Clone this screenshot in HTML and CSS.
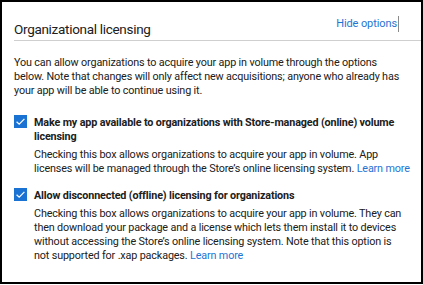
FILE: index.html
```html
<!DOCTYPE html>
<html>
<head>
    <title>Organizational licensing</title>
    <link rel="stylesheet" href="styles.css">
</head>
<body>
    <div id="panel">
        <div id="heading">
            <div id="title">Organizational licensing</div>
            <a class="link" id="toggle" href="#">Hide options</a>
        </div>
        <p id="intro">
            You can allow organizations to acquire your app in volume through the options<br>
            below. Note that changes will only affect new acquisitions; anyone who already has<br>
            your app will be able to continue using it.
        </p>
        <div class="option">
            <div class="check">
                <svg width="13" height="13" viewBox="0 0 13 13"><path d="M2.6 6.7 L5.2 9.2 L10.4 3.9" fill="none" stroke="white" stroke-width="1.2"/></svg>
            </div>
            <div class="option-text">
                <div class="option-label">Make my app available to organizations with Store-managed (online) volume<br>licensing</div>
                <div class="option-desc">
                    Checking this box allows organizations to acquire your app in volume. App<br>
                    licenses will be managed through the Store’s online licensing system. <a class="link" href="#">Learn more</a>
                </div>
            </div>
        </div>
        <div class="option">
            <div class="check">
                <svg width="13" height="13" viewBox="0 0 13 13"><path d="M2.6 6.7 L5.2 9.2 L10.4 3.9" fill="none" stroke="white" stroke-width="1.2"/></svg>
            </div>
            <div class="option-text">
                <div class="option-label">Allow disconnected (offline) licensing for organizations</div>
                <div class="option-desc">
                    Checking this box allows organizations to acquire your app in volume. They can<br>
                    then download your package and a license which lets them install it to devices<br>
                    without accessing the Store’s online licensing system. Note that this option is<br>
                    not supported for .xap packages. <a class="link" href="#">Learn more</a>
                </div>
            </div>
        </div>
    </div>
</body>
</html>
```

FILE: styles.css
```css
body{
    margin:0;
    background-color:white;
    font-family:Roboto, "Liberation Sans", sans-serif;
    color:#202020;
}

#panel{
    width:423px;
    height:284px;
    box-sizing:border-box;
    border:2px solid black;
    padding-left:12px;
    white-space:nowrap;
}

#heading{
    display:flex;
    justify-content:space-between;
    align-items:center;
    height:26px;
    padding-top:12px;
    padding-right:22px;
    border-bottom:1px solid #cfcfcf;
}

#title{
    font-size:13.5px;
    letter-spacing:-0.3px;
    line-height:16px;
    margin-top:4px;
}

#toggle{
    font-size:11px;
    letter-spacing:-0.1px;
    line-height:16px;
    margin-top:-6px;
    padding-right:1px;
    border-right:1px solid #8a8a8a;
}

.link{
    color:#1f74d4;
    text-decoration:none;
}

#intro{
    margin:15px 0 0;
    font-size:10.8px;
    letter-spacing:-0.15px;
    line-height:14px;
}

.option{
    display:flex;
    margin-top:18px;
}

.option + .option{
    margin-top:13px;
}

.check{
    flex:none;
    width:13px;
    height:13px;
    background-color:#1a72d2;
    margin-top:-1px;
    margin-right:7px;
}

.check svg{
    display:block;
}

.option-label{
    font-size:10.8px;
    font-weight:bold;
    letter-spacing:-0.15px;
    line-height:14px;
}

.option-desc{
    font-size:10.8px;
    letter-spacing:-0.15px;
    line-height:14px;
    margin-top:4px;
}
```
